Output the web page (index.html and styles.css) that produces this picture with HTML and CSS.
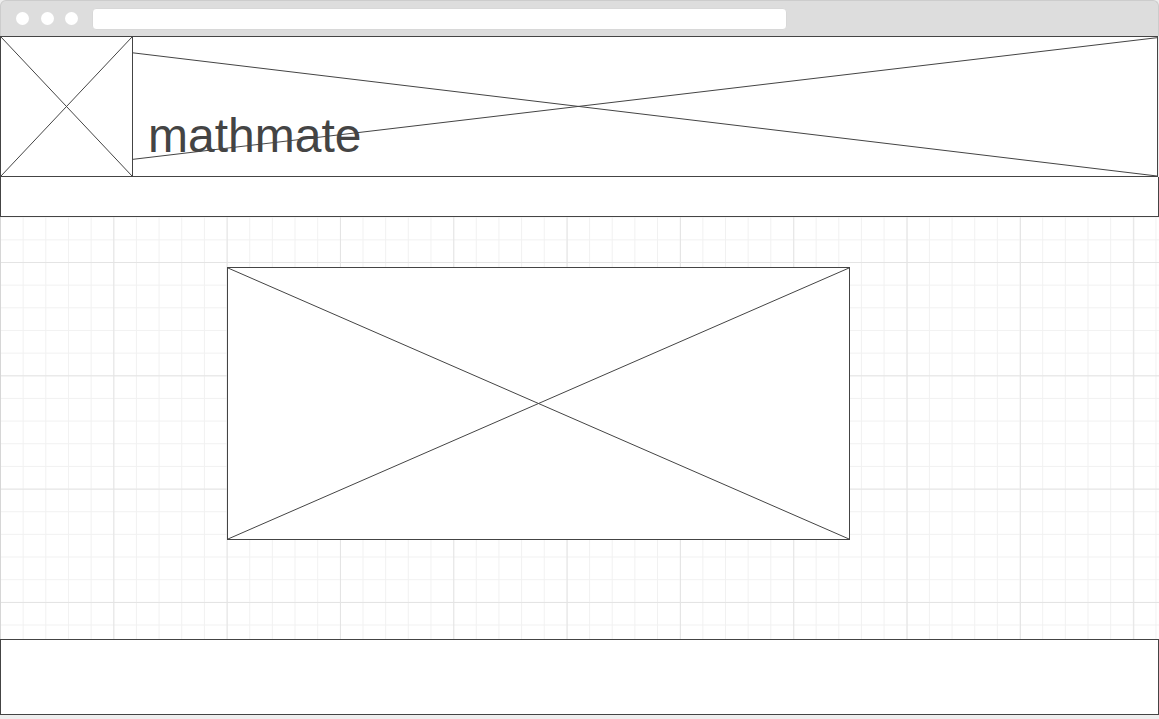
FILE: index.html
```html
<!DOCTYPE html>
<html>
<head>
<meta charset="utf-8">
<link rel="stylesheet" href="styles.css">
</head>
<body>
<div class="window">
  <div class="topbar">
    <div class="dots"><span class="dot"></span><span class="dot"></span><span class="dot"></span></div>
    <div class="address"></div>
  </div>
  <div class="header">
    <div class="logo">
      <svg class="xsvg" width="100%" height="100%"><line x1="0" y1="0" x2="100%" y2="100%"/><line x1="0" y1="100%" x2="100%" y2="0"/></svg>
    </div>
    <div class="banner">
      <svg class="xsvg" width="100%" height="100%"><line x1="0" y1="11.4%" x2="100%" y2="100%"/><line x1="0" y1="88%" x2="100%" y2="0.5%"/></svg>
      <h1 class="title">mathmate</h1>
    </div>
  </div>
  <div class="nav"></div>
  <div class="main">
    <div class="hero">
      <svg class="xsvg" width="100%" height="100%"><line x1="0" y1="0" x2="100%" y2="100%"/><line x1="0" y1="100%" x2="100%" y2="0"/></svg>
    </div>
  </div>
  <div class="footer"></div>
</div>
</body>
</html>
```
FILE: styles.css
```css
* { box-sizing: border-box; }
html, body { margin: 0; padding: 0; }
body {
  width: 1159px;
  height: 719px;
  overflow: hidden;
  background: #eeeeee;
  font-family: "Liberation Sans", Arial, sans-serif;
}
.window {
  width: 1159px;
  height: 719px;
  display: flex;
  flex-direction: column;
  background: #eeeeee;
}
.topbar {
  height: 36px;
  flex: none;
  background: #dddddd;
  border: 1px solid #cccccc;
  border-bottom: 0;
  border-radius: 6px 6px 0 0;
  display: flex;
  align-items: flex-start;
  padding: 6px 0 0 15px;
}
.dots {
  display: flex;
  gap: 11.5px;
  padding-top: 5px;
}
.dot {
  width: 13px;
  height: 13px;
  border-radius: 50%;
  background: #ffffff;
}
.address {
  margin-left: 14px;
  width: 695px;
  height: 22px;
  margin-top: 1px;
  background: #ffffff;
  border-radius: 4px;
  border: 1px solid #d8d8d8;
}
.header {
  height: 141px;
  flex: none;
  display: flex;
  width: 1158px;
}
.logo {
  width: 133px;
  height: 141px;
  border: 1px solid #444444;
  background: #ffffff;
  position: relative;
}
.banner {
  flex: 1;
  height: 141px;
  border: 1px solid #444444;
  border-left: 0;
  background: #ffffff;
  position: relative;
  display: flex;
  align-items: flex-end;
  padding: 0 0 16px 15px;
}
.xsvg {
  position: absolute;
  left: 0;
  top: 0;
  overflow: visible;
}
.xsvg line {
  stroke: #444444;
  stroke-width: 1;
}
.title {
  position: relative;
  margin: 0;
  font-weight: normal;
  font-size: 48px;
  line-height: 1;
  color: #444444;
}
.nav {
  height: 40px;
  flex: none;
  border: 1px solid #444444;
  border-top: 0;
  background: #ffffff;
}
.main {
  flex: none;
  height: 422px;
  border-left: 1px solid #d6d6d6;
  background-color: #ffffff;
  background-image:
    linear-gradient(to right, #e4e4e4 1px, transparent 1px),
    linear-gradient(to bottom, #e4e4e4 1px, transparent 1px),
    linear-gradient(to right, #f1f1f1 1px, transparent 1px),
    linear-gradient(to bottom, #f1f1f1 1px, transparent 1px);
  background-size: 113.33px 113.33px, 113.33px 113.33px, 22.667px 22.667px, 22.667px 22.667px;
  background-position: -1px 45px, -1px 45px, -1px 45px, -1px 45px;
  padding: 50px 0 0 226px;
}
.hero {
  width: 623px;
  height: 273px;
  border: 1px solid #444444;
  background: #ffffff;
  position: relative;
}
.footer {
  height: 76px;
  flex: none;
  border: 1px solid #444444;
  background: #ffffff;
}
```
